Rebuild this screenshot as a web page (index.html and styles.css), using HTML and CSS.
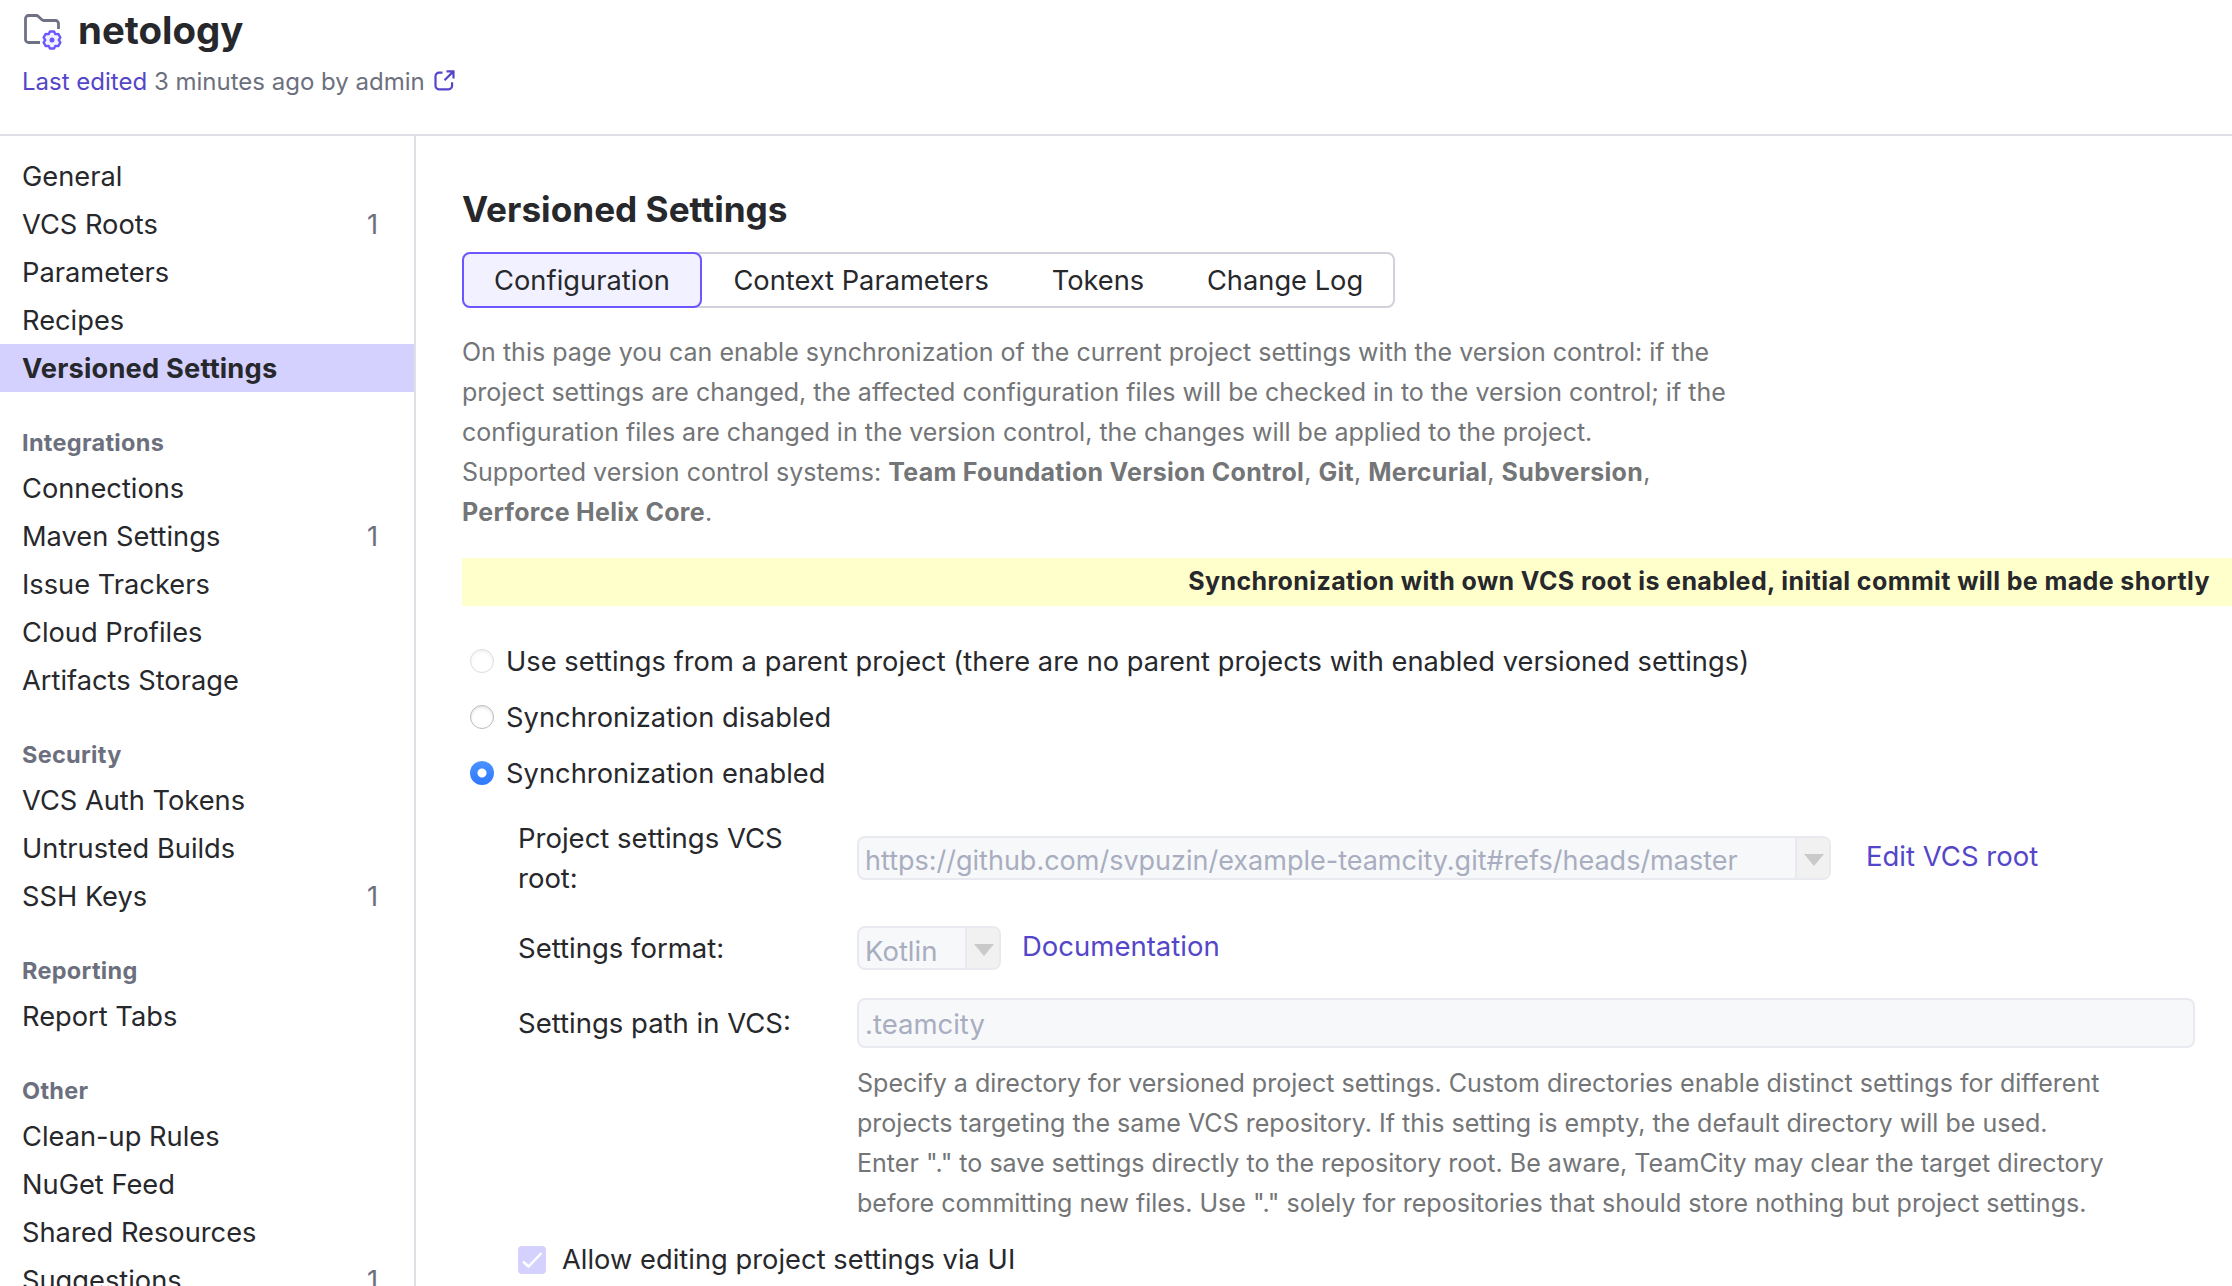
FILE: index.html
```html
<!DOCTYPE html>
<html lang="en">
<head>
<meta charset="utf-8">
<title>netology — Versioned Settings</title>
<link rel="stylesheet" href="styles.css">
</head>
<body>
<header class="header">
  <div class="header-title">
    <svg class="project-icon" width="42" height="42" viewBox="0 0 42 42" fill="none">
      <path class="folder" d="M18 32.500H6.500a3 3 0 0 1-3-3V8.500a3 3 0 0 1 3-3h7.800c.8 0 1.500.300 2.100.9l3.200 3.200c.6.6 1.300.9 2.100.9H33.500a3 3 0 0 1 3 3V19"/>
      <g transform="translate(30 30)">
        <path class="gear" d="M-2.100-8.500H2.100L3.350-5.800L6.310-6.070L8.410-2.430L6.700 0L8.410 2.430L6.310 6.070L3.350 5.800L2.100 8.500H-2.100L-3.350 5.800L-6.310 6.070L-8.410 2.430L-6.700 0L-8.410-2.430L-6.310-6.070L-3.350-5.800Z"/>
        <circle class="gear-dot" r="2.500"/>
      </g>
    </svg>
    <h1 class="project-name">netology</h1>
  </div>
  <div class="edited"><a class="link">Last edited</a> 3 minutes ago by admin
    <svg class="external" width="21" height="21" viewBox="0 0 21 21" fill="none"><path d="M8.500 2.700H5A3.500 3.500 0 0 0 1.500 6.200v9.600A3.500 3.500 0 0 0 5 19.300h9.600a3.500 3.500 0 0 0 3.500-3.500V12.300M12.500 1.300h7V8.500M19.200 1.600l-8.700 8.700"/></svg>
  </div>
</header>
<div class="layout">
  <nav class="sidebar">
    <a class="item"><span>General</span></a>
    <a class="item"><span>VCS Roots</span><span class="count">1</span></a>
    <a class="item"><span>Parameters</span></a>
    <a class="item"><span>Recipes</span></a>
    <a class="item active"><span>Versioned Settings</span></a>
    <h3 class="group">Integrations</h3>
    <a class="item"><span>Connections</span></a>
    <a class="item"><span>Maven Settings</span><span class="count">1</span></a>
    <a class="item"><span>Issue Trackers</span></a>
    <a class="item"><span>Cloud Profiles</span></a>
    <a class="item"><span>Artifacts Storage</span></a>
    <h3 class="group">Security</h3>
    <a class="item"><span>VCS Auth Tokens</span></a>
    <a class="item"><span>Untrusted Builds</span></a>
    <a class="item"><span>SSH Keys</span><span class="count">1</span></a>
    <h3 class="group">Reporting</h3>
    <a class="item"><span>Report Tabs</span></a>
    <h3 class="group">Other</h3>
    <a class="item"><span>Clean-up Rules</span></a>
    <a class="item"><span>NuGet Feed</span></a>
    <a class="item"><span>Shared Resources</span></a>
    <a class="item"><span>Suggestions</span><span class="count">1</span></a>
  </nav>
  <main class="main">
    <h2 class="page-title">Versioned Settings</h2>
    <div class="tabs">
      <a class="tab selected">Configuration</a>
      <a class="tab">Context Parameters</a>
      <a class="tab">Tokens</a>
      <a class="tab">Change Log</a>
    </div>
    <p class="description">On this page you can enable synchronization of the current project settings with the version control: if the<br>project settings are changed, the affected configuration files will be checked in to the version control; if the<br>configuration files are changed in the version control, the changes will be applied to the project.<br>Supported version control systems: <b>Team Foundation Version Control</b>, <b>Git</b>, <b>Mercurial</b>, <b>Subversion</b>,<br><b>Perforce Helix Core</b>.</p>
    <div class="banner">Synchronization with own VCS root is enabled, initial commit will be made shortly</div>
    <div class="options">
      <label class="option"><span class="radio muted"></span><span class="option-text">Use settings from a parent project (there are no parent projects with enabled versioned settings)</span></label>
      <label class="option"><span class="radio"></span><span class="option-text">Synchronization disabled</span></label>
      <label class="option"><span class="radio checked"></span><span class="option-text">Synchronization enabled</span></label>
    </div>
    <div class="form">
      <div class="row row-root">
        <div class="label">Project settings VCS<br>root:</div>
        <div class="select select-root"><span class="value">https://github.com/svpuzin/example-teamcity.git#refs/heads/master</span><span class="arrow"></span></div>
        <a class="link edit-link">Edit VCS root</a>
      </div>
      <div class="row row-format">
        <div class="label">Settings format:</div>
        <div class="select select-format"><span class="value">Kotlin</span><span class="arrow"></span></div>
        <a class="link doc-link">Documentation</a>
      </div>
      <div class="row row-path">
        <div class="label">Settings path in VCS:</div>
        <div class="input">.teamcity</div>
      </div>
      <p class="help">Specify a directory for versioned project settings. Custom directories enable distinct settings for different<br>projects targeting the same VCS repository. If this setting is empty, the default directory will be used.<br>Enter "." to save settings directly to the repository root. Be aware, TeamCity may clear the target directory<br>before committing new files. Use "." solely for repositories that should store nothing but project settings.</p>
      <label class="allow">
        <svg class="checkbox" width="28" height="28" viewBox="0 0 28 28" fill="none"><rect width="28" height="28" rx="4"/><path d="M5 15.500l5.500 5L23.500 7"/></svg>
        <span>Allow editing project settings via UI</span>
      </label>
    </div>
  </main>
</div>
</body>
</html>
```
FILE: styles.css
```css
* { box-sizing: border-box; }
body {
  margin: 0;
  height: 1286px;
  overflow: hidden;
  background: #fff;
  color: #27282c;
  font: 27.25px/40px Inter, "Liberation Sans", sans-serif;
}
h1, h2, h3, p { margin: 0; }
.header {
  height: 136px;
  padding: 10px 22px 0;
  border-bottom: 2px solid #dfe0e5;
}
.header-title { display: flex; height: 40px; }
.project-icon { margin-right: 14px; flex: none; }
.folder { stroke: #6f7284; stroke-width: 2.8; }
.gear { fill: #f2f1ff; stroke: #6b57ff; stroke-width: 2.3; stroke-linejoin: round; }
.gear-dot { fill: #6b57ff; }
.project-name { font-size: 38.4px; line-height: 41px; font-weight: 700; }
.edited { margin-top: 12px; font-size: 24px; color: #6c707e; }
.link { color: #5446c9; }
.external { vertical-align: -1px; margin-left: 2.5px; }
.external path { stroke: #5446c9; stroke-width: 2.2; }
.layout { display: flex; }
.sidebar { width: 416px; height: 1150px; padding-top: 16px; border-right: 2px solid #dfe0e5; flex: none; overflow: hidden; }
.item { display: flex; justify-content: space-between; height: 48px; line-height: 50px; padding: 0 36px 0 22px; }
.active { background: #d4d1ff; font-weight: 700; letter-spacing: 0.18px; }
.count { color: #6c707e; }
.group { font-size: 23.5px; line-height: 40px; font-weight: 700; letter-spacing: 0.3px; color: #6c707e; padding: 31px 0 1px 22px; }
.main { flex: 1; padding: 49px 0 0 46px; }
.page-title { font-size: 35.2px; line-height: 48px; font-weight: 700; }
.tabs { display: inline-flex; height: 56px; margin-top: 19px; border-radius: 8px; box-shadow: inset 0 0 0 2px #d1d1db; vertical-align: top; }
.tab { padding: 0 31.4px; line-height: 58px; }
.selected { padding: 0 32px; letter-spacing: 0.05px; border-radius: 8px; background: #f2f1ff; box-shadow: inset 0 0 0 2px #6b57ff; }
.description { margin-top: 24px; font-size: 25px; color: #737577; }
.description b { letter-spacing: 0.3px; }
.banner { margin-top: 26px; height: 48px; line-height: 46px; padding-right: 22px; text-align: right; font-size: 25px; font-weight: 700; letter-spacing: 0.4px; background: #ffffcc; }
.options { padding: 27px 0 0 8px; }
.option { display: flex; align-items: center; height: 56px; }
.option-text { padding-top: 2px; letter-spacing: 0.04px; }
.radio { width: 24px; height: 24px; margin-right: 12px; border-radius: 50%; border: 1px solid #b9b9b9; box-shadow: inset 0 2px 3px #e8e8e8; }
.muted { opacity: .5; }
.checked { border: 0; background: radial-gradient(circle, #fff 4px, transparent 5px), linear-gradient(#4a93ff, #2f78ff); box-shadow: none; }
.form { padding-left: 56px; }
.row { display: flex; font-size: 27.5px; }
.label { width: 339px; flex: none; }
.row-root { height: 125px; padding-top: 17px; }
.row-root .select, .edit-link { margin-top: 18px; }
.row-format { height: 72px; }
.row-format .label { padding-top: 2px; }
.row-path .label { padding-top: 5px; }
.select { display: flex; justify-content: space-between; height: 44px; border: 2px solid #e9eaef; border-radius: 8px; background: #f7f8fa; color: #a8adbf; overflow: hidden; }
.value { padding-left: 6px; line-height: 46px; }
.arrow { width: 34px; flex: none; padding: 4px 0 0 2px; border-left: 2px solid #e9eaef; background: #f1f1f1; display: flex; align-items: center; justify-content: center; }
.arrow::after { content: ""; border: 10px solid transparent; border-top: 12px solid #c9c9c9; border-bottom: 0; }
.select-root { width: 974px; font-size: 27px; }
.select-format { width: 144px; }
.edit-link { margin-left: 35px; }
.doc-link { margin-left: 21px; }
.input { width: 1338px; height: 50px; line-height: 48px; padding-left: 6px; border: 2px solid #e9eaef; border-radius: 8px; background: #f7f8fa; color: #a8adbf; }
.help { margin: 15px 0 0 339px; font-size: 25.05px; color: #737577; }
.allow { display: flex; gap: 16px; align-items: center; margin-top: 17px; letter-spacing: 0.04px; }
.checkbox rect { fill: #d4d1ff; }
.checkbox path { stroke: #fff; stroke-width: 2.500; }
```
